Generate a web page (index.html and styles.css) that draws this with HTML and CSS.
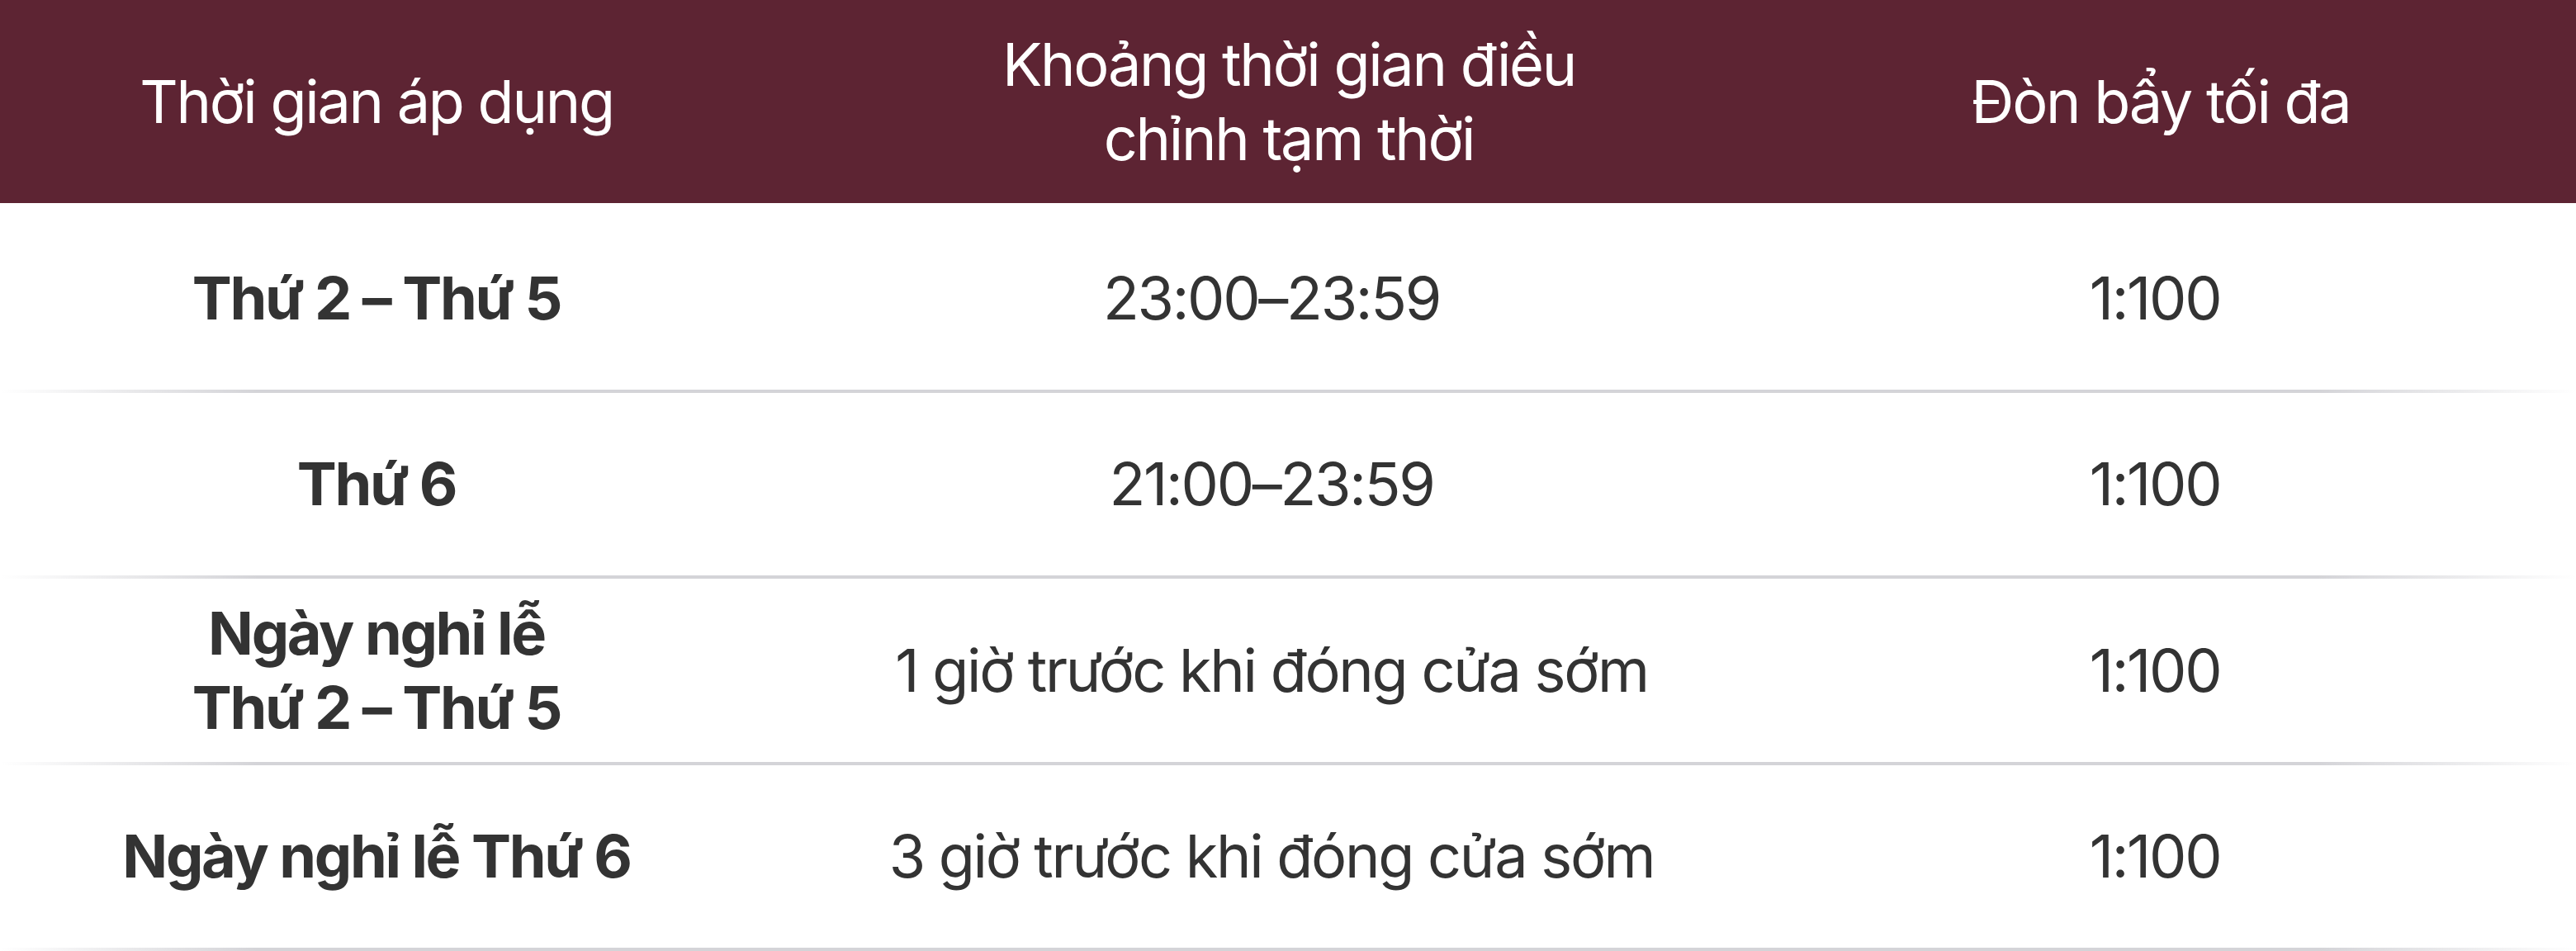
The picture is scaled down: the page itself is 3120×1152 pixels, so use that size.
FILE: index.html
```html
<!DOCTYPE html>
<html lang="vi">
<head>
<meta charset="utf-8">
<title>Đòn bẩy</title>
<link rel="stylesheet" href="styles.css">
</head>
<body>
<div class="table">
  <div class="head">
    <div class="th">Thời gian áp dụng</div>
    <div class="th"><span class="wrap">Khoảng thời gian điều chỉnh tạm thời</span></div>
    <div class="th">Đòn bẩy tối đa</div>
  </div>
  <div class="row">
    <div class="td day">Thứ 2 – Thứ 5</div>
    <div class="td">23:00–23:59</div>
    <div class="td">1:100</div>
  </div>
  <div class="row">
    <div class="td day">Thứ 6</div>
    <div class="td">21:00–23:59</div>
    <div class="td">1:100</div>
  </div>
  <div class="row">
    <div class="td day">Ngày nghỉ lễ<br>Thứ 2 – Thứ 5</div>
    <div class="td">1 giờ trước khi đóng cửa sớm</div>
    <div class="td">1:100</div>
  </div>
  <div class="row">
    <div class="td day">Ngày nghỉ lễ Thứ 6</div>
    <div class="td">3 giờ trước khi đóng cửa sớm</div>
    <div class="td">1:100</div>
  </div>
</div>
</body>
</html>
```
FILE: styles.css
```css
html, body {
  margin: 0;
  padding: 0;
  background: #ffffff;
}
body {
  font-family: Inter, "Noto Sans", "Liberation Sans", sans-serif;
  font-size: 72px;
  line-height: 90px;
  letter-spacing: -2.3px;
  color: #333333;
  overflow: hidden;
}
.table {
  width: 3120px;
}
.head {
  display: grid;
  grid-template-columns: 912px 1298px 1fr;
  padding-right: 96px;
  height: 246px;
  background: #5d2433;
  border-bottom: 4px solid #ffffff;
  color: #ffffff;
  font-weight: 400;
}
.th {
  display: flex;
  align-items: center;
  justify-content: center;
  text-align: center;
}
.wrap {
  display: block;
  max-width: 740px;
}
.row {
  display: grid;
  grid-template-columns: 912px 1256px 1fr;
  padding-right: 68px;
  box-sizing: border-box;
  height: 225.5px;
  padding-bottom: 4px;
  background: linear-gradient(90deg, rgba(212,212,216,0) 0%, #d4d4d8 10%, #d4d4d8 90%, rgba(212,212,216,0) 100%) left bottom / 100% 4px no-repeat;
}
.td {
  display: flex;
  align-items: center;
  justify-content: center;
  text-align: center;
  font-weight: 400;
}
.td.day {
  font-weight: 700;
}
```
